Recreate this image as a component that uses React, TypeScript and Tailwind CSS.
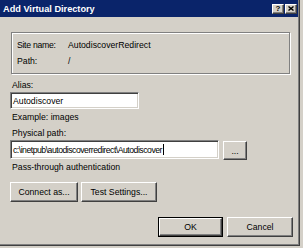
import React from 'react';

// raised 3d button face, classic style
const raised =
  'bg-[#d4d0c8] border border-t-white border-l-white border-r-[#404040] border-b-[#404040] shadow-[inset_-1px_-1px_0_#808080]';
const sunken =
  'bg-white border border-t-[#808080] border-l-[#808080] border-r-white border-b-white shadow-[inset_1px_1px_0_#404040,inset_-1px_-1px_0_#d4d0c8]';

const Btn = ({ label, w, isDefault = false }: { label: string; w: string; isDefault?: boolean }) => {
  if (isDefault) {
    return (
      <div className={`${w} h-[20px] border border-black flex`}>
        <div className={`${raised} flex-1 flex items-center justify-center`}>{label}</div>
      </div>
    );
  }
  return <div className={`${raised} ${w} h-[20px] flex items-center justify-center`}>{label}</div>;
};

export default function App() {
  return (
    <div
      className="w-[303px] h-[248px] bg-[#d4d0c8] text-black text-[8.7px] leading-[14px]"
      style={{ fontFamily: '"Liberation Sans", Arial, sans-serif' }}
    >
      <div className="w-[300px] h-[246px] border-r border-b border-[#404040]">
        <div className="h-full border-r border-b border-[#808080] flex flex-col">
          {/* title bar */}
          <div className="h-[17px] bg-[#0a246a] flex items-center pl-[3px] pr-[1px]">
            <span className="flex-1 text-white font-bold text-[9.2px]">Add Virtual Directory</span>
            <div className={`${raised} w-[12px] h-[10px] flex items-center justify-center font-bold text-[8px] leading-none`}>
              ?
            </div>
            <div className={`${raised} w-[12px] h-[10px] ml-[1px] flex items-center justify-center`}>
              <svg width="6" height="5" viewBox="0 0 6 5">
                <path d="M0.5 0.5 L5.5 4.5 M5.5 0.5 L0.5 4.5" stroke="#000" strokeWidth="1.4" />
              </svg>
            </div>
          </div>

          <div className="flex-1 flex flex-col pl-[10px] pr-[5px]">
            {/* site info group */}
            <div className="ml-[1px] mt-[15px] w-[279px] h-[42px] border border-[#808080] shadow-[inset_1px_1px_0_#fff,1px_1px_0_#fff] pt-[4px] pl-[5px]">
              <div className="flex leading-[16px]">
                <span className="w-[51px] tracking-[-0.3px]">Site name:</span>
                <span>AutodiscoverRedirect</span>
              </div>
              <div className="flex leading-[16px]">
                <span className="w-[51px]">Path:</span>
                <span>/</span>
              </div>
            </div>

            <div className="mt-[4px] pl-[2px]">Alias:</div>
            <div className={`${sunken} w-[129px] h-[17px] flex items-center pl-[2px]`}>Autodiscover</div>
            <div className="mt-[1px] pl-[2px]">Example: images</div>

            <div className="mt-[2px] pl-[2px]">Physical path:</div>
            <div className="flex items-start">
              <div className={`${sunken} w-[209px] h-[19px] flex items-center pl-[2px]`}>
                <span className="tracking-[-0.5px]">c:\inetpub\autodiscoverredirect\Autodiscover</span>
                <span className="ml-[1px] w-px h-[11px] bg-black" />
              </div>
              <div className={`${raised} ml-[4px] mt-[1px] w-[24px] h-[19px] flex items-center justify-center`}>...</div>
            </div>

            <div className="pl-[2px]">Pass-through authentication</div>

            <div className="mt-[8px] flex gap-[3px]">
              <Btn label="Connect as..." w="w-[68px]" />
              <Btn label="Test Settings..." w="w-[76px]" />
            </div>

            <div className="mt-[15px] flex justify-end gap-[4px]">
              <Btn label="OK" w="w-[65px]" isDefault />
              <Btn label="Cancel" w="w-[66px]" />
            </div>
          </div>
        </div>
      </div>
    </div>
  );
}
